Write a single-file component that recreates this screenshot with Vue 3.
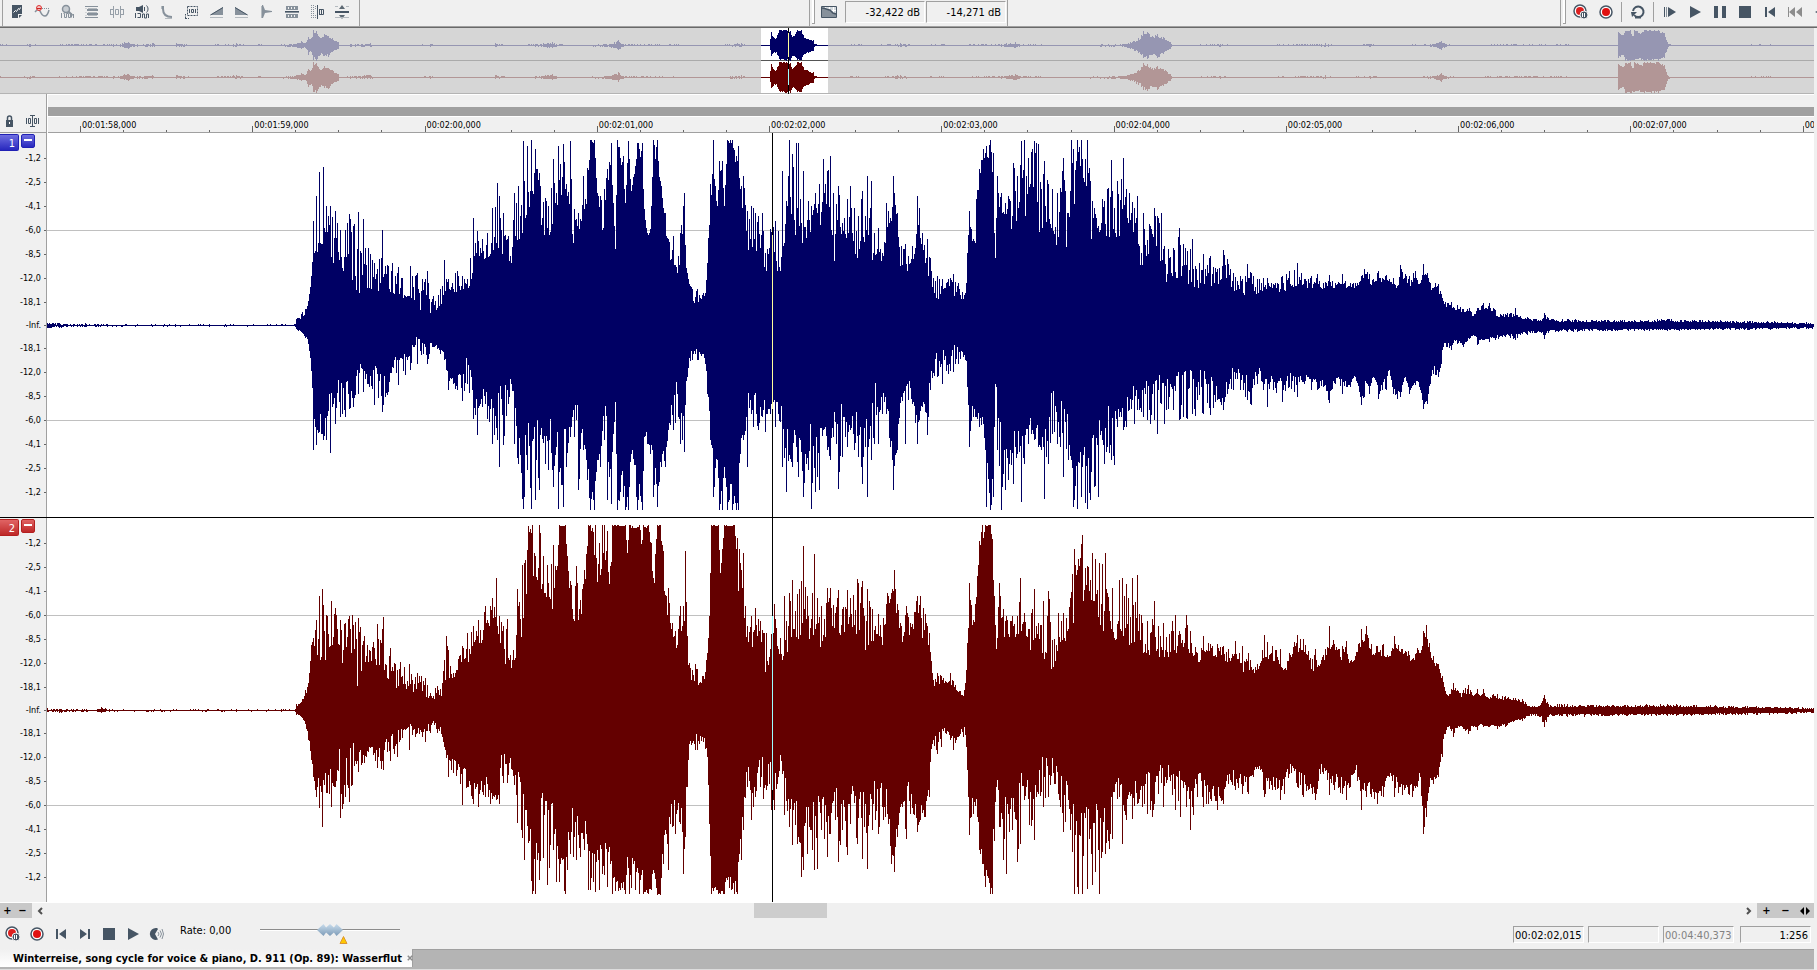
<script setup>
import { ref } from 'vue'

const rate = ref(0)
const levels = ['-32,422 dB', '-14,271 dB']
const scale = ['-1,2', '-2,5', '-4,1', '-6,0', '-8,5', '-12,0', '-18,1', '-Inf.', '-18,1', '-12,0', '-8,5', '-6,0', '-4,1', '-2,5', '-1,2']
const seconds = ['01:58', '01:59', '02:00', '02:01', '02:02', '02:03', '02:04', '02:05', '02:06', '02:07', '02:08']

// view geometry, in samples of 1:256
const VIEW = 1766
const SECOND = 44100 / 256
const FIRST = 32
const secondWidth = (SECOND / VIEW) * 100 + '%'
const rulerOffset = (FIRST / VIEW) * 100 + '%'

const dark = '#465564'
const gray = '#87919b'

const icons = {
  sheet: `<path fill="${dark}" d="M3 1h10v9h-4v4H3z"/><path fill="${dark}" d="M10 14v-3h3z"/><path stroke="#fff" fill="none" d="M4.500 8.500l2-2 1 1 2-3 1 1 1-2"/>`,
  envelope: `<path fill="none" stroke="${gray}" stroke-width="1.500" d="M1 8l2-2c3-1 3 1 4 3s2 3 4 3 3-2 4-6"/><path stroke="${gray}" stroke-dasharray="1 1" d="M8 4.500h8"/><circle cx="5" cy="4" r="2.500" fill="#f6c9c9" stroke="#d33"/><path stroke="#c22" d="M3 4.500h4"/>`,
  zoomwave: `<circle cx="7" cy="5" r="3.500" fill="#c8cdd2" stroke="${gray}" stroke-width="1.500"/><path stroke="${gray}" stroke-width="2" d="M9.500 7.500l4 4"/><path fill="none" stroke="${gray}" d="M2.500 9v5M4.500 9.500h1v4h2v-4h2v4h2v-4h1v4M14.500 10v4"/>`,
  lines: `<path stroke="${gray}" d="M1 2.500h13M1 13.500h13"/><path stroke="${gray}" stroke-width="2" d="M3 6h11M3 10h11"/><path stroke="#b4babf" d="M4 4.500h9M4 8.500h9M4 11.500h9M2 4v1M2 8v1M2 11v1"/>`,
  bracket: `<path fill="none" stroke="#969fa8" d="M4.500 2v12M11.500 2v12M1.500 5v6M6.500 5.500h3v5h-3zM14.500 5v6M2 5.500h2M2 10.500h2M12 5.500h2M12 10.500h2"/>`,
  monitor: `<path fill="${dark}" d="M2 3h3l4-2v8L5 7H2z"/><path fill="none" stroke="${dark}" d="M10.500 3v4M12.500 1.500c2 2 2 5 0 7M1.500 9v5M3.500 9.500h3v4h-3M8.500 14v-4h2v4h2v-4h2v4"/>`,
  decay: `<path fill="none" stroke="${gray}" stroke-width="2" d="M4 2v3c0 5 3 8 9 8"/><path stroke="#b4babf" d="M2.500 2v3M6 14.500h7"/>`,
  region: `<path fill="none" stroke="${dark}" stroke-dasharray="2 1" d="M1.500 14.500V10M1 14.500h4M3.500 2.500h10v9h-10z"/><path stroke="${dark}" fill="none" d="M5.500 5v4M7.500 5.500h2v3h-2zM11.500 5v4"/>`,
  rampup: `<path fill="${gray}" d="M1 11L14 3v8z"/><path stroke="#b4babf" d="M1 13.500h13"/><path stroke="${dark}" d="M1.500 11L14 3.500"/>`,
  rampdown: `<path fill="${gray}" d="M1 3l13 8H1z"/><path stroke="#b4babf" d="M1 13.500h13"/><path stroke="${dark}" d="M1 3.500L13.500 11"/>`,
  spike: `<path fill="${gray}" d="M3 1h1l2 5 7 1v1l-7 1-2 5H3z"/><path fill="#b4babf" d="M2 2h1v12H2z"/>`,
  stereo: `<path fill="${gray}" d="M2 2h12v4H2zM2 10h12v4H2z"/><path stroke="#f0f0f0" d="M4.500 3v2M7.500 3v2M10.500 3v2M4.500 11v2M7.500 11v2M10.500 11v2"/><path stroke="${dark}" d="M1 7.500h14"/><path stroke="${gray}" d="M1 8.500h14"/>`,
  half: `<path stroke="${gray}" stroke-dasharray="1 1" d="M2.500 1v14M4.500 1v14M6.500 2v3M6.500 11v4"/><path fill="none" stroke="${dark}" d="M8.500 1v14M10.500 5v6M10.500 5.500h4v5h-4M12.500 5v6"/>`,
  vfit: `<path fill="#5d6973" d="M8 1l3 4H5zM8 15l3-4H5z"/><path fill="${dark}" d="M1 7h14v2H1z"/><path stroke="#b4babf" d="M1 2.500h3M12 2.500h3M1 13.500h14"/>`,
  chart: `<path fill="#d3d9de" stroke="${dark}" d="M.5 2.500h15v11H.5z"/><path stroke="#fff" d="M4.500 3v10M8.500 3v10M12.500 3v10M1 6.500h14M1 10.500h14"/><path fill="${gray}" d="M1 4c4 0 5 2 8 2l3 3 3 1v3H1z"/><path fill="none" stroke="${dark}" stroke-width="1.500" d="M1 4c4 0 5 2 8 2l3 3 3 1"/>`,
  arm: `<circle cx="7" cy="7" r="6" fill="#fff" stroke="${dark}" stroke-width="1.500"/><circle cx="7" cy="7" r="4" fill="#dc2020"/><circle cx="11" cy="11" r="4" fill="${dark}" stroke="#f0f0f0"/><path stroke="#fff" d="M9.500 9v4M11.500 9v4"/>`,
  record: `<circle cx="8" cy="8" r="6" fill="#fff" stroke="${dark}" stroke-width="1.500"/><circle cx="8" cy="8" r="4" fill="#e01010"/>`,
  loop: `<path fill="none" stroke="${dark}" stroke-width="2" d="M4 11a5.300 5.300 0 1 0-1-4M5 13.500h6"/><path fill="${dark}" d="M1 8h6L2 13z"/>`,
  playall: `<path fill="${dark}" d="M2 3h1v10H2zM6 3l8 5-8 5z"/><path fill="${gray}" d="M4 3h1v10H4z"/>`,
  play: `<path fill="${dark}" d="M3 2l11 6-11 6z"/>`,
  pause: `<path fill="${dark}" d="M2 2h4v12H2zM10 2h4v12h-4z"/>`,
  stop: `<path fill="${dark}" d="M2 2h12v12H2z"/>`,
  start: `<path fill="${dark}" d="M3 3h2v10H3zM13 3v10L6 8z"/>`,
  end: `<path fill="${dark}" d="M11 3h2v10h-2zM3 3v10l7-5z"/>`,
  rewind: `<path fill="#8c8c8c" d="M1 3h1v10H1zM8 3v10L2 8zM15 3v10L9 8z"/>`,
  back: `<path fill="${dark}" d="M12 3v10L3 8z"/>`,
  scrub: `<path fill="${dark}" d="M8 2a6 6 0 1 0 1 11.500L6 8l3-5z"/><path fill="none" stroke="${gray}" d="M9 6q2 2 0 4M11 4.500q3 3.500 0 7M13 3q3 5 0 10"/>`,
  lock: `<path fill="${dark}" d="M5 7h7v7H5z"/><path fill="none" stroke="${dark}" stroke-width="1.500" d="M6.500 7V5a2 2 0 0 1 4 0v2"/><path fill="#fff" d="M8 9h1v2H8z"/>`,
  snap: `<path fill="none" stroke="${dark}" d="M8.500 2v12M6 2.500h5M6 13.500h5M2.500 5v6M4.500 5.500h2v5h-2zM10.500 5.500h2v5h-2zM14.500 5v6"/>`
}

const tools = ['sheet', 'envelope', 'zoomwave', 'lines', 'bracket', 'monitor', 'decay', 'region', 'rampup', 'rampdown', 'spike', 'stereo', 'half', 'vfit']
const transport = ['playall', 'play', 'pause', 'stop', 'start', 'rewind', 'back']
const footTransport = ['arm', 'record', 'start', 'end', 'stop', 'play', 'scrub']

// envelope points: x, upper peak, upper floor, lower peak, lower floor
const left = `0 2 1 2 1,12 2 0 2 0,30 .6 0 .6 0,38 2 0 1 0,60 .6 0 .6 0,248 .6 0 .6 0,249 6 2 3 2,258 16 11 12 9,261 24 22 18 15,264 49 45 45 40,266 104 72 124 70,269 129 70 119 88,272 153 80 106 90,276 158 62 114 72,
279 119 62 114 68,283 119 46 127 61,288 114 70 98 48,293 95 62 91 58,298 95 46 91 48,302 111 46 83 43,306 99 39 81 58,311 113 22 68 34,316 106 29 66 44,321 77 36 58 44,327 62 32 79 38,
335 95 36 86 48,341 59 39 66 51,345 62 22 41 24,351 58 26 59 34,363 59 29 44 21,370 52 16 38 9,380 54 11 38 18,386 29 12 21 16,393 36 16 28 23,397 65 32 34 24,401 46 36 64 51,410 54 32 64 44,
415 49 36 75 51,420 46 32 58 26,426 107 52 93 61,430 94 66 109 71,435 86 66 81 58,440 92 66 93 68,445 117 72 118 68,450 142 76 114 78,452 129 69 141 48,456 112 72 119 54,461 89 69 78 58,
464 62 49 58 51,467 132 79 118 64,471 139 86 138 94,476 184 82 183 104,480 179 119 144 94,484 185 116 183 104,488 176 146 174 94,492 152 106 164 94,498 127 86 138 88,501 119 79 144 84,
506 166 102 161 104,511 179 122 183 98,516 181 132 181 104,523 184 106 111 98,527 116 74 111 74,531 112 89 164 78,536 149 96 124 94,540 157 129 154 131,543 185 182 184 164,547 185 182 184 164,
550 132 126 134 114,553 129 109 141 111,557 136 79 114 61,560 156 129 174 104,564 182 162 178 138,568 76 74 76 74,570 185 179 184 181,576 169 146 171 131,578 122 118 184 171,581 184 176 184 171,
584 134 130 128 118,590 182 172 184 138,595 182 156 184 182,597 116 112 111 108,600 92 89 118 104,603 96 92 128 101,606 185 162 171 111,610 185 166 181 164,614 139 129 141 124,618 112 101 141 124,
621 86 64 104 84,626 89 62 104 71,631 69 49 91 38,633 92 69 118 68,637 132 69 126 88,640 52 42 51 38,645 36 22 34 21,650 36 22 34 21,658 32 29 38 30,660 62 54 68 44,663 141 109 114 104,
666 185 146 171 131,670 119 116 134 129,672 164 149 184 164,675 164 149 184 164,677 119 118 141 138,680 185 181 184 158,685 185 181 184 158,689 169 151 184 174,691 179 176 184 151,693 136 99 128 84,
696 149 116 114 104,700 114 76 141 61,704 119 71 88 71,706 117 49 101 58,711 109 69 104 68,715 112 82 91 78,718 72 37 106 48,720 76 31 88 31,723 96 82 88 68,728 104 66 101 39,731 94 44 88 48,
735 154 62 141 84,739 124 92 166 81,742 185 112 129 104,745 171 92 141 114,749 182 89 121 78,751 182 96 151 101,756 154 79 171 131,761 124 82 144 118,764 119 82 183 84,768 132 116 166 104,
772 141 96 164 104,776 166 112 104 94,780 154 122 124 108,783 169 109 134 104,786 132 62 111 98,789 121 67 118 59,791 139 96 163 81,795 102 76 131 74,800 126 89 121 94,803 139 96 104 98,
807 117 61 124 81,811 109 62 131 81,815 134 96 158 61,818 109 64 121 81,820 149 92 171 88,824 144 62 134 78,827 92 69 118 48,831 97 72 118 81,835 72 59 88 68,839 122 86 88 64,843 107 86 121 104,
846 149 129 164 138,850 112 89 124 104,854 79 44 71 64,858 81 69 118 64,861 69 46 74 49,865 79 59 78 68,870 129 89 118 94,872 117 92 94 88,875 92 72 81 71,880 86 52 109 81,883 67 41 64 44,
890 49 24 51 21,895 46 32 58 21,901 46 36 48 38,906 51 29 46 18,911 42 26 38 21,918 32 22 34 28,920 72 62 61 38,922 114 99 121 114,926 86 72 91 68,929 126 82 91 78,932 156 146 101 91,
936 176 152 98 91,939 179 159 181 121,943 185 172 184 181,946 172 137 171 121,948 67 46 58 33,950 149 119 124 88,954 132 109 184 94,958 122 112 164 114,961 129 106 154 114,966 162 76 158 98,
970 149 109 128 98,974 184 126 176 114,977 185 102 138 101,981 167 109 118 88,987 184 139 114 98,991 181 99 121 98,994 136 72 124 98,997 164 96 173 98,1001 141 99 138 91,1005 136 92 108 58,
1010 132 76 118 91,1013 137 96 121 78,1016 167 96 151 64,1021 112 64 134 94,1024 185 126 134 121,1026 176 102 181 138,1030 185 156 183 141,1034 185 146 171 94,1040 185 132 183 101,1043 144 76 174 121,
1047 117 109 161 98,1051 99 89 171 94,1055 126 99 114 91,1057 124 112 138 121,1060 136 77 121 61,1064 165 74 134 93,1067 117 86 139 88,1070 144 86 101 78,1074 146 67 91 84,1076 167 126 104 71,
1079 136 102 101 71,1082 132 102 84 64,1087 117 89 98 51,1090 129 102 84 70,1092 79 57 84 58,1096 112 56 91 58,1103 99 69 98 51,1107 117 64 94 58,1110 109 79 108 44,1114 112 56 78 54,
1117 79 42 98 58,1121 76 44 83 48,1126 77 46 84 54,1132 97 46 94 44,1136 81 46 91 44,1140 74 36 93 43,1145 86 39 88 43,1148 59 36 90 44,1156 71 39 88 43,1163 69 39 89 51,1170 56 39 74 48,
1176 75 39 84 51,1180 66 46 68 51,1186 52 34 64 36,1193 49 36 64 43,1198 49 26 71 44,1200 61 39 74 53,1204 52 32 79 54,1210 46 31 58 41,1216 47 32 64 38,1220 47 36 81 58,1226 41 34 64 46,
1235 49 32 76 53,1242 54 36 61 46,1250 62 39 71 51,1257 46 36 58 48,1264 49 37 64 51,1270 51 37 64 54,1276 42 36 61 54,1282 50 39 77 68,1288 42 36 58 49,1295 51 36 68 54,1303 42 37 61 54,
1308 42 37 51 49,1314 49 42 79 68,1317 56 49 71 54,1322 51 42 68 61,1326 46 37 51 49,1331 54 46 73 61,1335 47 41 64 54,1339 50 47 64 51,1342 46 42 44 42,1346 47 39 68 61,1350 39 36 73 69,
1353 60 46 71 58,1358 51 46 51 50,1362 49 37 68 64,1368 54 46 59 54,1372 41 39 61 56,1376 61 46 83 78,1380 52 51 78 71,1383 42 36 58 53,1386 37 34 48 39,1388 42 39 49 41,1391 41 32 51 44,
1394 31 29 38 28,1396 24 19 21 18,1400 22 17 21 14,1404 23 19 24 21,1407 17 14 14 13,1410 20 14 18 13,1416 16 12 21 18,1422 17 14 13 11,1426 9 7 9 6,1430 17 14 19 13,1436 22 14 14 13,
1442 22 16 16 11,1448 15 9 14 9,1458 11 7 11 8,1468 17 9 14 8,1473 9 7 9 7,1480 8 5 9 5,1493 5 3 6 3,1497 12 8 13 8,1501 7 4 7 4,1520 6 3 6 3,1560 5 3 5 3,1620 6 3 5 3,1700 4 2 4 2,1767 3 1 3 1`

const right = `0 2 0 1 0,14 1 0 2 0,50 .6 0 .6 0,54 3 1 2 1,62 .6 0 .6 0,248 .6 0 .6 0,249 6 2 4 3,253 7 7 5 4,258 20 13 13 11,261 27 25 29 22,264 65 60 49 45,266 72 68 66 60,269 90 54 86 70,272 114 49 97 66,275 121 49 116 66,
279 95 49 82 56,284 109 55 96 49,288 102 57 76 60,293 90 40 107 26,298 87 44 86 44,302 94 62 91 32,305 95 30 74 29,311 92 20 61 36,317 74 40 52 40,323 59 44 37 34,330 86 37 57 39,336 93 40 59 29,
343 62 24 50 20,350 40 20 46 20,353 48 30 29 18,362 46 14 39 12,370 37 20 22 16,378 32 14 31 16,383 17 7 22 9,390 24 14 22 12,395 27 14 26 18,399 74 34 47 42,401 60 32 66 46,406 37 30 62 46,
415 64 50 94 59,420 77 44 76 50,426 84 67 93 72,431 90 64 96 72,438 104 70 86 62,443 104 87 93 82,449 132 87 89 79,452 94 67 93 59,456 84 34 72 29,460 91 54 72 49,465 50 37 59 46,470 121 57 112 59,
475 145 77 127 66,477 147 97 149 99,481 184 117 132 89,485 185 140 183 126,488 154 114 183 132,492 185 117 169 110,496 154 90 147 61,500 145 120 174 99,506 165 97 139 89,509 140 120 171 126,
512 185 184 171 146,518 185 184 183 146,520 154 147 159 129,523 129 104 143 99,529 144 74 149 93,533 110 92 146 89,537 140 104 139 99,541 185 184 179 139,543 185 184 179 139,548 185 144 181 143,
552 167 112 179 113,555 185 137 163 103,557 185 146 164 122,560 179 144 176 143,563 144 112 153 132,565 185 184 183 166,578 185 184 183 166,580 157 154 146 126,582 185 182 183 146,592 185 182 183 146,
593 180 134 169 119,596 185 182 183 179,601 185 182 183 179,604 167 160 179 176,606 132 106 159 150,610 185 184 184 179,613 185 184 184 179,616 159 129 153 119,619 114 99 123 119,621 122 87 159 106,
625 87 67 116 76,628 79 57 123 89,633 104 64 113 89,636 104 84 163 113,638 159 90 126 83,640 74 47 76 62,642 47 29 33 29,648 46 24 39 23,650 41 26 39 19,656 34 21 31 19,660 57 54 46 38,
662 94 90 113 110,664 185 184 183 176,671 185 184 183 176,673 137 134 183 180,677 185 184 183 166,687 185 184 183 166,690 172 116 183 179,692 161 122 143 106,694 140 127 149 119,696 157 99 119 83,
700 84 64 76 49,704 94 57 109 66,708 102 67 86 73,713 89 67 76 41,716 77 54 88 46,719 77 29 79 39,724 76 61 99 44,727 106 61 99 63,731 61 37 66 33,737 114 57 104 63,742 117 57 116 63,
745 130 74 134 86,750 116 72 133 86,754 129 67 166 116,756 164 101 159 126,760 114 84 143 76,763 82 64 119 86,767 156 76 159 89,770 112 76 158 89,774 104 57 119 71,780 122 81 146 103,783 122 74 123 93,
788 97 69 109 73,791 120 71 151 79,795 101 74 119 86,800 120 84 144 99,803 112 67 113 73,810 131 77 133 79,815 129 84 148 83,817 94 57 116 66,820 121 64 158 93,825 101 67 119 73,828 84 64 109 63,
831 96 74 123 83,836 92 62 109 63,840 117 104 103 83,844 117 104 153 133,847 140 127 161 149,850 106 74 126 99,854 84 66 93 86,859 104 67 128 66,863 87 77 103 76,870 114 81 121 99,873 114 81 109 93,
878 96 57 106 96,882 77 54 86 60,885 37 24 33 26,890 37 21 43 23,894 34 27 36 13,903 37 26 29 23,906 29 22 39 26,913 19 16 23 21,916 14 11 26 11,918 27 20 24 16,920 67 57 59 50,922 127 104 124 103,
926 90 79 103 73,930 134 111 106 93,932 169 154 139 119,935 185 157 153 136,938 185 184 176 153,943 185 184 183 176,945 171 165 183 170,947 114 94 130 63,949 61 54 76 60,952 127 84 116 76,
956 101 64 149 86,959 94 64 163 86,965 94 71 119 86,970 94 71 151 86,973 132 67 133 60,977 97 67 89 66,982 81 54 114 70,987 121 67 129 66,991 87 67 83 56,996 109 54 96 39,1001 119 31 86 46,
1007 71 44 73 41,1011 97 64 83 63,1016 97 67 121 66,1023 112 71 119 76,1027 161 87 183 99,1031 151 107 183 119,1035 175 97 183 96,1040 144 121 178 96,1045 157 104 174 89,1048 151 101 161 89,
1052 147 81 183 93,1055 146 81 141 89,1058 157 71 143 89,1062 99 77 138 79,1065 122 81 128 86,1070 86 57 88 63,1072 130 81 86 69,1075 132 74 133 53,1079 126 64 109 83,1085 132 66 108 76,
1090 135 67 93 66,1095 87 57 96 76,1100 89 57 103 56,1105 91 51 106 53,1107 109 67 93 63,1111 84 51 83 51,1116 87 51 96 56,1122 76 44 66 49,1125 89 57 84 59,1128 95 57 99 63,1133 76 57 106 59,
1139 95 46 96 66,1143 79 61 119 79,1150 57 42 86 56,1156 74 57 96 66,1161 67 56 93 76,1170 66 51 99 73,1176 64 54 93 66,1181 61 41 73 54,1188 69 57 79 59,1195 64 37 83 63,1201 57 41 83 66,
1206 41 36 66 63,1210 46 39 56 46,1217 75 51 86 66,1225 64 51 79 66,1233 61 37 89 66,1237 41 32 83 66,1242 57 51 63 48,1250 75 57 76 59,1256 71 57 86 63,1261 59 54 79 66,1265 51 36 83 66,
1268 61 44 89 83,1273 46 42 63 51,1282 84 61 84 63,1287 66 57 79 63,1295 64 47 83 59,1299 69 54 89 73,1303 49 44 76 66,1308 54 51 59 46,1314 81 64 99 79,1319 84 71 86 66,1324 66 52 86 73,
1330 64 54 93 83,1336 66 54 86 73,1342 54 51 66 61,1347 74 64 86 63,1355 61 54 84 73,1361 59 54 83 73,1365 51 44 86 73,1370 62 59 76 73,1373 57 54 66 56,1376 79 67 123 89,1379 85 74 106 93,
1382 67 57 76 66,1386 54 46 73 66,1391 46 41 66 63,1395 34 27 46 33,1398 19 17 23 16,1401 14 12 16 13,1406 27 21 26 19,1412 17 12 16 14,1421 25 17 23 18,1426 14 13 16 13,1430 21 17 19 16,
1433 14 13 13 12,1436 21 17 16 14,1441 12 10 16 15,1446 16 14 14 13,1450 16 10 18 14,1458 14 10 16 13,1466 12 10 11 9,1475 11 7 10 7,1482 4 3 5 3,1493 5 3 6 3,1497 15 10 16 10,1501 6 3 6 3,1520 6 3 6 3,1560 5 3 5 3,1620 6 3 5 3,1700 4 2 4 2,1767 3 1 3 1`

function makeRandom(seed) {
  let s = seed
  return () => {
    s = (s * 16807) % 2147483647
    return s / 2147483647
  }
}

function wavePath(text, middle, seed, from = 0, to = Infinity) {
  const points = text.split(',').map((p) => p.trim().split(/\s+/).map(Number))
  const random = makeRandom(seed)
  let d = ''
  for (let i = 0; i < points.length - 1; i++) {
    const a = points[i]
    const b = points[i + 1]
    for (let x = a[0]; x < b[0]; x++) {
      const k = (x - a[0]) / (b[0] - a[0])
      const mix = (n) => a[n] + (b[n] - a[n]) * k
      const up = x === a[0] ? a[1] : mix(2) + (mix(1) - mix(2)) * random() ** 1.5
      const down = x === a[0] ? a[3] : mix(4) + (mix(3) - mix(4)) * random() ** 1.5
      if (x < from || x >= to) continue
      d += `M${x} ${middle - Math.round(up)}h1V${middle + 1 + Math.round(down)}h-1z`
    }
  }
  return d
}

const channels = [
  { id: 1, name: 'blue', path: wavePath(left, 192, 91), caret: [102, 276] },
  { id: 2, name: 'red', path: wavePath(right, 192, 417), caret: [98, 272] }
]

// whole-file overview
const whole = `0 1 0 0 0,14 0 0 0 0,30 1 0 1 0,42 0 0 0 0,66 1 0 0 0,90 1 0 0 0,113 1 0 .6 0,120 1 0 .6 0,124 3 1 2 1,128 3 2 3 2,133 1 0 1 0,147 1 0 1 0,152 2 0 1 0,158 0 0 0 0,175 0 0 0 0,176 2 1 1 0,184 1 0 .6 0,201 0 0 0 0,225 1 0 0 0,236 2 0 1 0,248 0 0 0 0,258 1 0 0 0,
268 0 0 0 0,290 1 0 1 0,297 2 1 2 1,301 4 2 3 2,305 2 1 2 1,308 8 6 9 6,311 7 5 6 5,313 15 11 14 10,316 14 12 15 12,320 7 6 9 7,324 11 9 10 8,328 9 8 11 8,332 7 5 6 5,338 3 2 3 2,339 0 0 0 0,350 1 0 .6 0,370 2 0 1 0,376 0 0 0 0,400 0 0 0 0,
430 1 0 .6 0,445 0 0 0 0,494 0 0 0 0,495 2 0 1 0,510 0 0 0 0,535 1 0 .6 0,552 3 1 2 1,556 1 0 .6 0,575 0 0 0 0,605 1 0 1 0,614 3 1 2 1,618 5 2 4 2,623 1 0 .6 0,655 1 0 0 0,710 0 0 0 0,741 2 0 1 0,747 0 0 0 0,
769 0 0 0 0,771 13 10 10 8,775 6 5 7 5,777 10 8 9 7,779 15 13 13 12,780 15 14 14 13,786 15 14 15 13,790 14 12 15 13,792 8 7 10 9,795 11 10 11 10,797 15 14 14 12,801 15 13 14 13,803 10 8 9 8,808 6 5 7 6,813 5 4 5 4,814 1 1 1 0,818 0 0 0 0,
858 1 0 0 0,868 0 0 0 0,887 1 0 0 0,900 2 0 1 0,914 0 0 0 0,941 1 0 0 0,952 0 0 0 0,978 1 0 0 0,1001 1 0 .6 0,1015 3 1 2 1,1019 1 0 .6 0,1035 1 0 0 0,1050 0 0 0 0,
1122 1 0 1 0,1130 3 1 3 1,1138 7 4 7 4,1141 10 7 9 6,1143 14 11 12 9,1147 13 10 13 10,1152 9 7 9 7,1157 11 8 12 9,1163 8 6 8 6,1170 3 2 3 2,1172 0 0 0 0,1220 1 0 .6 0,1240 0 0 0 0,1310 1 0 0 0,1325 2 0 1 0,1335 0 0 0 0,1370 1 0 .6 0,
1390 0 0 0 0,1430 1 0 .6 0,1437 2 1 2 1,1441 4 2 4 2,1446 1 0 .6 0,1465 0 0 0 0,1500 1 0 0 0,1560 1 0 0 0,1578 0 0 0 0,1617 0 0 0 0,1618 13 12 12 11,1623 10 9 9 8,1625 14 13 15 13,1630 15 14 15 14,1633 9 6 14 13,1634 15 14 14 13,1641 12 10 14 12,1644 15 14 15 13,
1658 15 13 15 13,1664 12 10 12 10,1666 5 4 6 4,1668 1 0 1 0,1673 0 0 0 0,1750 0 0 0 0,1751 1 0 0 0,1770 1 0 0 0,1775 0 0 0 0,1814 0 0 0 0`
const overview = [
  { name: 'blue', y: 17, wave: wavePath(whole, 17, 5), active: wavePath(whole, 17, 5, 761, 828) },
  { name: 'red', y: 49, wave: wavePath(whole, 49, 23), active: wavePath(whole, 49, 23, 761, 828) }
]
</script>

<template>
  <main class="editor">
    <header class="toolbar">
      <div class="group tools">
        <button v-for="name in tools" :key="name" class="tool" :aria-label="name">
          <svg viewBox="0 0 16 16" v-html="icons[name]"></svg>
        </button>
      </div>
      <div class="group meter">
        <i class="grip"></i>
        <button class="tool" aria-label="chart"><svg viewBox="0 0 16 16" v-html="icons.chart"></svg></button>
        <output v-for="level in levels" :key="level" class="level">{{ level }}</output>
      </div>
      <div class="group playback">
        <i class="grip"></i>
        <button class="tool" aria-label="arm"><svg viewBox="0 0 16 16" v-html="icons.arm"></svg></button>
        <button class="tool" aria-label="record"><svg viewBox="0 0 16 16" v-html="icons.record"></svg></button>
        <i class="bar"></i>
        <button class="tool" aria-label="loop"><svg viewBox="0 0 16 16" v-html="icons.loop"></svg></button>
        <i class="bar"></i>
        <button v-for="name in transport" :key="name" class="tool" :aria-label="name">
          <svg viewBox="0 0 16 16" v-html="icons[name]"></svg>
        </button>
      </div>
    </header>

    <section class="body">
      <svg class="overview" viewBox="0 0 1814 66" preserveAspectRatio="none" shape-rendering="crispEdges">
        <rect width="1814" height="66" fill="#d6d6d6" />
        <rect y="32" width="1814" height="1" fill="#aaa" />
        <rect y="65" width="1814" height="1" fill="#b4b4b4" />
        <g v-for="row in overview" :key="row.name" :class="row.name">
          <path class="faded" :d="row.wave" />
          <rect class="faded" :y="row.y" width="1814" height="1" />
        </g>
        <rect x="761" width="67" height="65" fill="#fff" />
        <rect x="761" y="32" width="67" height="1" fill="#555" />
        <g v-for="row in overview" :key="row.name" :class="row.name">
          <path :d="row.active" />
          <rect x="761" :y="row.y" width="67" height="1" />
        </g>
        <rect x="788" width="1" height="66" fill="#000" />
        <rect x="788" y="5" width="1" height="24" fill="#ffff9b" />
        <rect x="788" y="41" width="1" height="16" fill="#9bffff" />
      </svg>

      <div class="timeline">
        <div class="locks">
          <button class="mini" aria-label="lock"><svg viewBox="0 0 16 16" v-html="icons.lock"></svg></button>
          <button class="mini" aria-label="snap"><svg viewBox="0 0 16 16" v-html="icons.snap"></svg></button>
        </div>
        <div class="ruler">
          <div class="markers"></div>
          <div class="seconds">
            <div class="lead" :style="{ width: rulerOffset }"></div>
            <div v-for="time in seconds" :key="time" class="second" :style="{ width: secondWidth }">
              <span class="time">00:{{ time }},000</span>
              <div class="ticks"><i v-for="n in 4" :key="n"></i></div>
            </div>
          </div>
        </div>
      </div>

      <section v-for="channel in channels" :key="channel.id" class="channel" :class="channel.name">
        <div class="side">
          <div class="head">
            <button class="badge">{{ channel.id }}</button>
            <button class="fold" aria-label="minimize"><i></i></button>
          </div>
          <div class="scale">
            <span v-for="(db, i) in scale" :key="i" :class="{ zero: i === 7 }">{{ db }}</span>
          </div>
        </div>
        <svg class="wave" viewBox="0 0 1767 384" preserveAspectRatio="none" shape-rendering="crispEdges">
          <rect y="97" width="1767" height="1" fill="#c0c0c0" />
          <rect y="287" width="1767" height="1" fill="#c0c0c0" />
          <path :d="channel.path" />
          <rect y="192" width="1767" height="1" />
          <rect x="725" width="1" height="384" fill="#000" />
          <rect class="caret" x="725" :y="channel.caret[0]" width="1" :height="channel.caret[1] - channel.caret[0]" />
        </svg>
      </section>

      <div class="scroll">
        <div class="zoom">
          <button>+</button>
          <button>−</button>
        </div>
        <button class="arrow" aria-label="scroll left"><svg viewBox="0 0 8 8"><path d="M6 1L3 4l3 3" /></svg></button>
        <div class="track"><i class="thumb"></i></div>
        <button class="arrow" aria-label="scroll right"><svg viewBox="0 0 8 8"><path d="M2 1l3 3-3 3" /></svg></button>
        <div class="zoom wide">
          <button>+</button>
          <button>−</button>
          <button aria-label="fit"><svg viewBox="0 0 12 8"><path d="M5 0v8L1 4zM7 0v8l4-4z" /></svg></button>
        </div>
      </div>

      <div class="status">
        <div class="foot">
          <button v-for="name in footTransport" :key="name" class="tool" :aria-label="name">
            <svg viewBox="0 0 16 16" v-html="icons[name]"></svg>
          </button>
        </div>
        <label class="rate" for="rate">Rate: 0,00</label>
        <div class="slider">
          <input id="rate" v-model="rate" type="range" min="-1" max="1" step="0.01" />
          <svg class="mark" viewBox="0 0 9 8"><path d="M4.500 .5l3.500 7H1z" /></svg>
        </div>
        <div class="fields">
          <output>00:02:02,015</output>
          <output></output>
          <output class="muted">00:04:40,373</output>
          <output class="ratio">1:256</output>
        </div>
      </div>
    </section>

    <footer class="tabs">
      <div class="tab">
        <a href="#">Winterreise, song cycle for voice &amp; piano, D. 911 (Op. 89): Wasserflut</a>
        <button aria-label="close"><svg viewBox="0 0 8 8"><path d="M1 1l6 6M7 1L1 7" /></svg></button>
      </div>
    </footer>
  </main>
</template>

<style>
body {
  background: #f0f0f0;
}
</style>

<style scoped>
.editor {
  min-height: 100vh;
  display: flex;
  flex-direction: column;
  overflow: hidden;
  background: #f0f0f0;
  color: #000;
  font-family: 'DejaVu Sans Condensed', 'DejaVu Sans', sans-serif;
  font-size: 11px;
}

* {
  box-sizing: border-box;
}

button {
  padding: 0;
  border: 0;
  background: none;
  font: inherit;
  color: inherit;
  display: flex;
  align-items: center;
  justify-content: center;
}

svg {
  display: block;
}

.toolbar {
  height: 28px;
  display: grid;
  grid-template-columns: 1fr auto 1fr;
  border-bottom: 1px solid #696969;
  box-shadow: inset 0 -1px #a0a0a0;
  overflow: hidden;
}

.group {
  display: flex;
  align-items: center;
  height: 26px;
  padding-bottom: 2px;
}

.tools {
  justify-self: start;
  padding: 0 5px 2px 4px;
  border-right: 1px solid #a0a0a0;
  box-shadow: inset 2px 0 #f0f0f0, inset 3px 0 #a0a0a0;
}

.meter {
  border: solid #a0a0a0;
  border-width: 0 1px;
}

.playback {
  justify-self: end;
  border-left: 1px solid #a0a0a0;
  margin-right: -15px;
}

.grip {
  width: 3px;
  height: 24px;
  margin: 0 2px;
  background: #fff;
  border-right: 1px solid #a0a0a0;
  border-bottom: 1px solid #a0a0a0;
}

.tool {
  width: 25px;
  height: 24px;
  flex: none;
}

.tool svg {
  width: 16px;
  height: 16px;
}

.bar {
  width: 1px;
  height: 20px;
  margin: 0 3px;
  background: #a0a0a0;
}

.level {
  width: 80px;
  height: 22px;
  margin: 0 1px 0 0;
  padding-right: 4px;
  line-height: 21px;
  text-align: right;
  border: 1px solid #a0a0a0;
  border-right-color: #fff;
  border-bottom-color: #fff;
}

.meter .tool {
  width: 28px;
  padding-right: 4px;
}

.body {
  padding-right: 3px;
  flex: 1;
}

.overview {
  width: 100%;
  height: 66px;
}

.blue {
  fill: #000064;
}

.red {
  fill: #640000;
}

.blue .faded {
  fill: #9696b2;
}

.red .faded {
  fill: #b29696;
}

.timeline {
  display: flex;
  height: 39px;
}

.locks {
  width: 47px;
  flex: none;
  display: flex;
  align-items: flex-end;
  justify-content: space-between;
  padding: 0 6px 3px 1px;
  border-right: 1px solid #a0a0a0;
  border-bottom: 1px solid #a0a0a0;
}

.mini,
.mini svg {
  width: 16px;
  height: 16px;
}

.ruler {
  flex: 1;
  min-width: 0;
  padding: 13px 0 0;
  border-left: 1px solid #fff;
  border-top: 1px solid #fff;
}

.markers {
  height: 9px;
  margin-top: -1px;
  background: #a0a0a0;
}

.seconds {
  display: flex;
  height: 17px;
  overflow: hidden;
  border-top: 1px solid #fff;
  border-bottom: 1px solid #a0a0a0;
}

.lead {
  flex: none;
}

.second {
  flex: none;
  display: flex;
  flex-direction: column;
  justify-content: space-between;
}

.time {
  padding: 2px 0 0 2px;
  font-size: 9px;
  line-height: 13px;
}

.ticks {
  display: flex;
  height: 3px;
  align-items: flex-end;
  margin-top: -3px;
}

.ticks i {
  flex: 1;
  height: 2px;
  border-left: 1px solid #646464;
}

.ticks i:first-child {
  height: 6px;
}

.channel {
  display: flex;
  background: #fff;
  border-bottom: 1px solid #000;
}

.channel.red {
  border-color: #fff;
}

.side {
  width: 47px;
  flex: none;
  display: flex;
  flex-direction: column;
  background: #f0f0f0;
  border-right: 1px solid #a0a0a0;
}

.head {
  height: 13px;
  flex: none;
  display: flex;
  gap: 2px;
  padding-top: 1px;
}

.badge {
  width: 19px;
  height: 17px;
  padding: 1px 3px 0 0;
  justify-content: flex-end;
  color: #fff;
  border: 1px solid;
  border-left: 0;
  border-radius: 0 2px 2px 0;
}

.fold {
  width: 14px;
  height: 14px;
  border: 1px solid;
  border-radius: 2px;
}

.fold i {
  width: 8px;
  height: 2px;
  margin-bottom: 3px;
  background: #fff;
}

.blue .badge,
.blue .fold {
  background: linear-gradient(#6e6ee0, #2828be);
  border-color: #2020b4;
}

.red .badge,
.red .fold {
  background: linear-gradient(#e06464, #be2828);
  border-color: #b42020;
}

.scale {
  display: flex;
  flex-direction: column;
}

.scale span {
  height: 24px;
  padding-right: 5px;
  line-height: 25px;
  font-size: 9px;
  text-align: right;
  background: linear-gradient(#646464, #646464) right 0 center / 2px 1px no-repeat;
}

.scale .zero {
  height: 22px;
  line-height: 23px;
}

.wave {
  flex: 1;
  min-width: 0;
  height: 384px;
}

.blue .caret {
  fill: #ffff9b;
}

.red .caret {
  fill: #9bffff;
}

.scroll {
  display: flex;
  height: 15px;
}

.zoom {
  width: 32px;
  display: flex;
  padding-right: 2px;
  background: #c8c8c8;
  font-weight: bold;
}

.zoom.wide {
  width: 57px;
  padding: 0;
}

.zoom button {
  flex: 1;
}

.zoom svg {
  width: 12px;
  height: 8px;
}

.arrow {
  width: 16px;
}

.arrow svg {
  width: 8px;
  height: 8px;
  fill: none;
  stroke: #505050;
  stroke-width: 2;
}

.track {
  flex: 1;
}

.thumb {
  display: block;
  width: 73px;
  height: 15px;
  margin-left: 41.7%;
  background: #cdcdcd;
}

.status {
  display: flex;
  height: 31px;
}

.foot {
  display: flex;
  padding: 4px 0 0 1px;
}

.foot .tool {
  width: 24px;
}

.rate {
  width: 81px;
  padding: 6px 0 0 11px;
  line-height: 14px;
}

.slider {
  width: 140px;
  padding-top: 6px;
  margin-left: 10px;
}

.slider input {
  display: block;
  width: 100%;
  height: 12px;
  margin: 0;
  appearance: none;
  background: linear-gradient(#8c8c8c 1px, #fff 1px) center / 100% 2px no-repeat;
}

.slider input::-webkit-slider-thumb {
  appearance: none;
  width: 26px;
  height: 12px;
  background: linear-gradient(#c8dcec, #7e9cb8);
  clip-path: polygon(0 50%, 25% 0, 35% 30%, 50% 0, 65% 30%, 75% 0, 100% 50%, 75% 100%, 65% 70%, 50% 100%, 35% 70%, 25% 100%);
}

.mark {
  width: 9px;
  height: 8px;
  margin: 0 0 0 79px;
  fill: #ffc800;
  stroke: #dc9632;
}

.fields {
  display: flex;
  gap: 4px;
  margin-left: auto;
  padding: 8px 3px 0 0;
}

.fields output {
  width: 71px;
  height: 17px;
  padding-left: 1px;
  line-height: 17px;
  white-space: nowrap;
  border: 1px solid #a0a0a0;
  border-right-color: #fff;
  border-bottom-color: #fff;
}

.fields .muted {
  color: #828282;
}

.fields .ratio {
  margin-left: 2px;
  padding-right: 2px;
  text-align: right;
}

.tabs {
  height: 21px;
  margin-right: 3px;
  background: #b4b4b4;
  border-top: 1px solid #a0a0a0;
  border-bottom: 1px solid #dcdcdc;
}

.tab {
  width: 413px;
  height: 18px;
  margin-top: -1px;
  padding-left: 13px;
  display: flex;
  align-items: center;
  gap: 5px;
  background: linear-gradient(#f0f0f0, #fff);
  border-right: 1px solid #a0a0a0;
}

.tab a {
  color: #000;
  text-decoration: none;
  font-weight: bold;
  font-size: 11px;
  white-space: nowrap;
}

.tab svg {
  width: 6px;
  height: 6px;
  stroke: #8c8c8c;
  stroke-width: 2;
}
</style>
